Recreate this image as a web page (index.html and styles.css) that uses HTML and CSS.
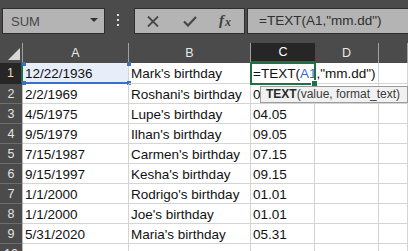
FILE: index.html
```html
<!DOCTYPE html>
<html>
<head>
<meta charset="utf-8">
<link rel="stylesheet" href="styles.css">
</head>
<body>
<div class="toolbar">
  <div class="namebox"><span>SUM</span><svg class="dd" width="8" height="4" viewBox="0 0 8 4"><path d="M0 0H8L4 4Z" fill="#333"/></svg></div>
  <div class="grip"><i></i><i></i><i></i></div>
  <div class="btnbox">
    <svg class="ico-x" width="12" height="11" viewBox="0 0 12 11"><path d="M1 0.5L11 10.5M11 0.5L1 10.5" stroke="#474747" stroke-width="1.8" fill="none"/></svg>
    <svg class="ico-check" width="14" height="11" viewBox="0 0 14 11"><path d="M1 5.5L5 9.5L13 1" stroke="#474747" stroke-width="2.2" fill="none"/></svg>
    <span class="fx"><i>f</i><i class="sub">x</i></span>
  </div>
  <div class="formula">=TEXT(A1,"mm.dd")</div>
</div>
<div class="sheet">
  <div class="corner"><svg width="22" height="19" viewBox="0 0 22 19"><path d="M20 5V17H8Z" fill="#d8d8d8"/></svg></div>
  <div class="ch">A</div><div class="ch">B</div><div class="ch active">C</div><div class="ch">D</div><div class="ch"></div>

  <div class="rh active">1</div>
  <div class="c ref">12/22/1936<i class="sq tl"></i><i class="sq tr"></i><i class="sq bl"></i><i class="sq br"></i><i class="refline"></i></div>
  <div class="c">Mark's birthday</div>
  <div class="c cur">=TEXT(<span class="blue">A1</span>,"mm.dd")<i class="curbox"><i class="handle"></i></i></div>
  <div class="c"></div><div class="c"></div>

  <div class="rh">2</div><div class="c">2/2/1969</div><div class="c">Roshani's birthday</div><div class="c">02.02</div><div class="c"></div><div class="c"></div>
  <div class="rh">3</div><div class="c">4/5/1975</div><div class="c">Lupe's birthday</div><div class="c">04.05</div><div class="c"></div><div class="c"></div>
  <div class="rh">4</div><div class="c">9/5/1979</div><div class="c">Ilhan's birthday</div><div class="c">09.05</div><div class="c"></div><div class="c"></div>
  <div class="rh">5</div><div class="c">7/15/1987</div><div class="c">Carmen's birthday</div><div class="c">07.15</div><div class="c"></div><div class="c"></div>
  <div class="rh">6</div><div class="c">9/15/1997</div><div class="c">Kesha's birthday</div><div class="c">09.15</div><div class="c"></div><div class="c"></div>
  <div class="rh">7</div><div class="c">1/1/2000</div><div class="c">Rodrigo's birthday</div><div class="c">01.01</div><div class="c"></div><div class="c"></div>
  <div class="rh">8</div><div class="c">1/1/2000</div><div class="c">Joe's birthday</div><div class="c">01.01</div><div class="c"></div><div class="c"></div>
  <div class="rh">9</div><div class="c">5/31/2020</div><div class="c">Maria's birthday</div><div class="c">05.31</div><div class="c"></div><div class="c"></div>
  <div class="rh">10</div><div class="c"></div><div class="c"></div><div class="c"></div><div class="c"></div><div class="c"></div>
</div>
<div class="tip"><b>TEXT</b>(value, format_text)</div>
</body>
</html>
```
FILE: styles.css
```css
html, body {
  margin: 0;
  padding: 0;
}
body {
  width: 408px;
  height: 251px;
  overflow: hidden;
  background: #4b4b4b;
  font-family: "Liberation Sans", Arial, sans-serif;
  position: relative;
}
.toolbar {
  height: 43px;
  box-sizing: border-box;
  padding-top: 8px;
  display: flex;
  align-items: flex-start;
}
.namebox {
  margin-left: 2px;
  width: 103px;
  height: 26px;
  box-sizing: border-box;
  border: 1px solid #2e2e2e;
  background: #b4b4b4;
  display: flex;
  align-items: center;
  justify-content: space-between;
  padding: 0 6px 0 8px;
  color: #474747;
  font-size: 13px;
}
.dd {
  margin-top: -2px;
}
.grip {
  margin: 6px 15px 0 12px;
  display: flex;
  flex-direction: column;
  gap: 3px;
}
.grip i {
  display: block;
  width: 2px;
  height: 2px;
  background: #e2e2e2;
}
.btnbox {
  width: 111px;
  height: 26px;
  box-sizing: border-box;
  border: 1px solid #2e2e2e;
  background: #b4b4b4;
  display: flex;
  align-items: center;
}
.ico-x {
  margin-left: 12px;
}
.ico-check {
  margin-left: 24px;
}
.fx {
  margin-left: 22px;
  font-family: "Liberation Serif", "Times New Roman", serif;
  font-style: italic;
  font-weight: bold;
  color: #3e3e3e;
  font-size: 15px;
  line-height: 15px;
}
.fx i {
  font-style: italic;
}
.fx .sub {
  font-size: 12px;
  position: relative;
  top: 1px;
  margin-left: 1px;
}
.formula {
  flex: 1;
  margin-left: 2px;
  margin-right: -4px;
  height: 26px;
  box-sizing: border-box;
  border: 1px solid #2e2e2e;
  background: #b4b4b4;
  padding-left: 11px;
  font-size: 13.5px;
  line-height: 24px;
  color: #2f2f2f;
  white-space: nowrap;
}
.sheet {
  display: grid;
  grid-template-columns: 23px 106px 122px 64px 64px 1fr;
  grid-template-rows: 20px 21px repeat(9, 20px);
  background: #fff;
}
.corner {
  background: #4b4b4b;
  border-right: 1px solid #a0a0a0;
  box-sizing: border-box;
}
.corner svg {
  display: block;
}
.ch {
  background: #4b4b4b;
  color: #e8e8e8;
  font-size: 12.5px;
  text-align: center;
  line-height: 20px;
  border-right: 1px solid #a0a0a0;
  box-sizing: border-box;
}
.ch.active {
  background: #262626;
  color: #ffffff;
  border-right: none;
  border-bottom: 2px solid #1e7145;
  line-height: 18px;
}
.rh {
  background: #4b4b4b;
  color: #e4e4e4;
  font-size: 12.5px;
  text-align: center;
  line-height: 19px;
  padding-top: 1px;
  border-bottom: 1px solid #6e6e6e;
  border-right: 1px solid #bdbdbd;
  box-sizing: border-box;
}
.rh.active {
  background: #262626;
  color: #f2d4b4;
  border-right: 2px solid #1e7145;
  border-bottom-color: #262626;
}
.c {
  border-right: 1px solid #d4d4d4;
  border-bottom: 1px solid #d4d4d4;
  box-sizing: border-box;
  font-size: 13.5px;
  line-height: 17px;
  padding: 2px 0 0 2px;
  white-space: nowrap;
  color: #111;
  position: relative;
}
.ref {
  background: #e7eef9;
}
.sq {
  position: absolute;
  width: 4px;
  height: 4px;
  background: #3d6fc4;
}
.sq.tl { left: -1px; top: -1px; }
.sq.tr { right: -3px; top: -1px; }
.sq.bl { left: -1px; bottom: -2px; }
.sq.br { right: -3px; bottom: -2px; }
.refline {
  position: absolute;
  left: 0;
  right: -1px;
  bottom: -1px;
  height: 2px;
  background: #3d6fc4;
}
.cur {
  z-index: 2;
}
.blue {
  color: #3a6cc2;
}
.curbox {
  position: absolute;
  left: -1px;
  top: -1px;
  right: -2px;
  bottom: -2px;
  border: 2px solid #1e7145;
}
.handle {
  position: absolute;
  right: -4px;
  bottom: -4px;
  width: 5px;
  height: 5px;
  background: #1e7145;
  border: 1px solid #fff;
}
.tip {
  position: absolute;
  left: 260px;
  top: 86px;
  width: 148px;
  height: 17px;
  box-sizing: border-box;
  border: 1px solid #9c9c9c;
  background: #f1f1f1;
  padding-left: 5px;
  font-size: 12px;
  line-height: 15px;
  color: #3a3a3a;
  white-space: nowrap;
  z-index: 3;
}
.tip b {
  color: #2a2a2a;
}
```
